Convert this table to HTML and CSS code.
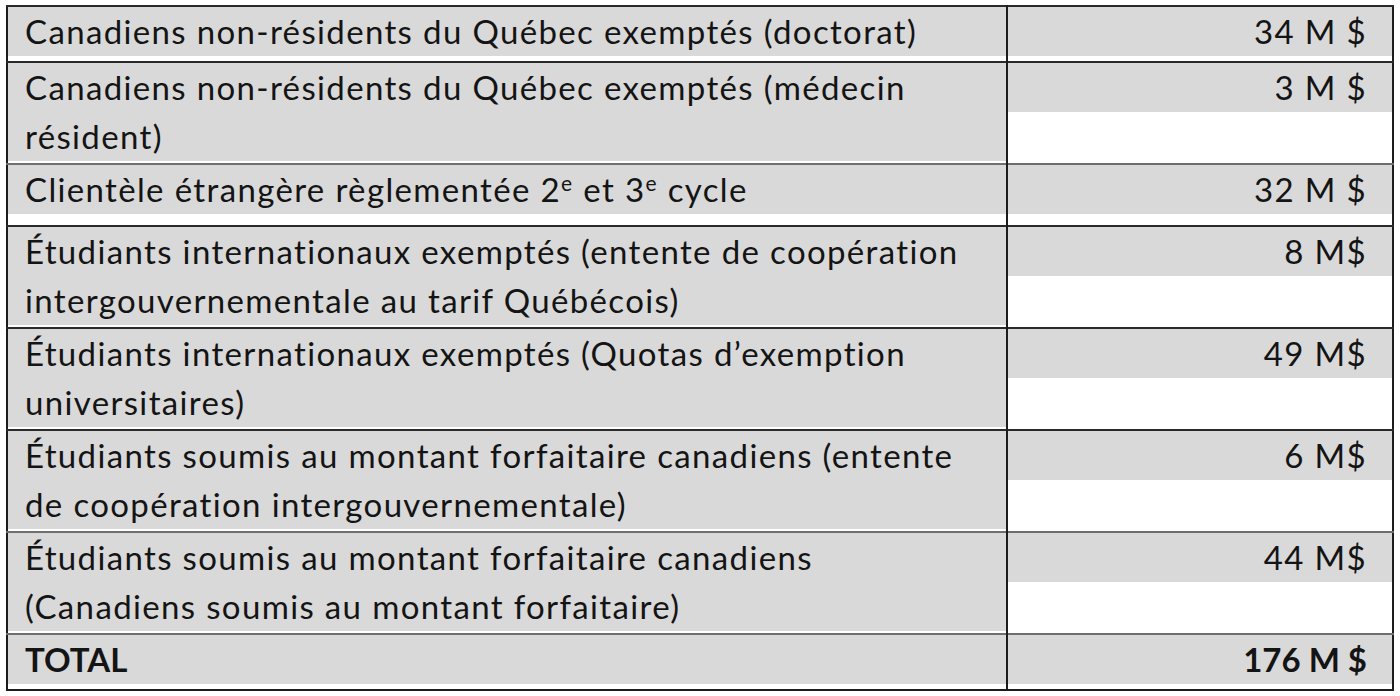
FILE: index.html
```html
<!DOCTYPE html>
<html lang="fr">
<head>
<meta charset="utf-8">
<title>Tableau</title>
<link rel="stylesheet" href="styles.css">
</head>
<body>
<table class="tbl">
  <tr class="r1 dark">
    <td class="lbl"><p>Canadiens non-résidents du Québec exemptés (doctorat)</p></td>
    <td class="val"><p>34 M $</p></td>
  </tr>
  <tr class="r2 dark">
    <td class="lbl"><p>Canadiens non-résidents du Québec exemptés (médecin<br>résident)</p></td>
    <td class="val"><p>3 M $</p></td>
  </tr>
  <tr class="r3 light">
    <td class="lbl"><p>Clientèle étrangère règlementée 2<sup>e</sup> et 3<sup>e</sup> cycle</p></td>
    <td class="val"><p>32 M $</p></td>
  </tr>
  <tr class="r2 dark">
    <td class="lbl"><p>Étudiants internationaux exemptés (entente de coopération<br>intergouvernementale au tarif Québécois)</p></td>
    <td class="val"><p>8 M$</p></td>
  </tr>
  <tr class="r2 dark">
    <td class="lbl"><p>Étudiants internationaux exemptés (Quotas d’exemption<br>universitaires)</p></td>
    <td class="val"><p>49 M$</p></td>
  </tr>
  <tr class="r2 dark">
    <td class="lbl"><p>Étudiants soumis au montant forfaitaire canadiens (entente<br>de coopération intergouvernementale)</p></td>
    <td class="val"><p>6 M$</p></td>
  </tr>
  <tr class="r2 light">
    <td class="lbl"><p>Étudiants soumis au montant forfaitaire canadiens<br>(Canadiens soumis au montant forfaitaire)</p></td>
    <td class="val"><p>44 M$</p></td>
  </tr>
  <tr class="r1 light total">
    <td class="lbl"><p>TOTAL</p></td>
    <td class="val"><p>176 M $</p></td>
  </tr>
</table>
</body>
</html>
```

FILE: styles.css
```css
html, body {
  margin: 0;
  padding: 0;
  background: #ffffff;
}
body {
  padding: 5px 0 0 6px;
  font-family: Lato, "Liberation Sans", sans-serif;
  font-size: 33px;
  letter-spacing: 1.35px;
  color: #141414;
}
.tbl {
  border-collapse: collapse;
  width: 1388px;
  table-layout: fixed;
  border: 2px solid #1c1c1c;
}
.tbl td {
  padding: 0 0 2px 0;
  vertical-align: top;
  border-top: 2px solid #2a2a2a;
}
.tbl tr.light td {
  border-top-color: #6e6e6e;
}
.tbl td.lbl {
  width: 998px;
  border-right: 2px solid #1c1c1c;
}
.tbl p {
  margin: 0;
  background: #d9d9d9;
  line-height: 49px;
  white-space: nowrap;
}
.tbl td.lbl p {
  padding-left: 17px;
}
.tbl td.val p {
  text-align: right;
  padding-right: 25px;
}
.tbl tr.r1 td {
  padding-bottom: 5px;
}
.tbl tr.r3 td {
  padding-bottom: 11px;
}
.tbl td.lbl sup {
  font-size: 21px;
  line-height: 0;
  vertical-align: 11px;
}
.tbl tr.total p {
  font-weight: 700;
  letter-spacing: 0;
}
```
